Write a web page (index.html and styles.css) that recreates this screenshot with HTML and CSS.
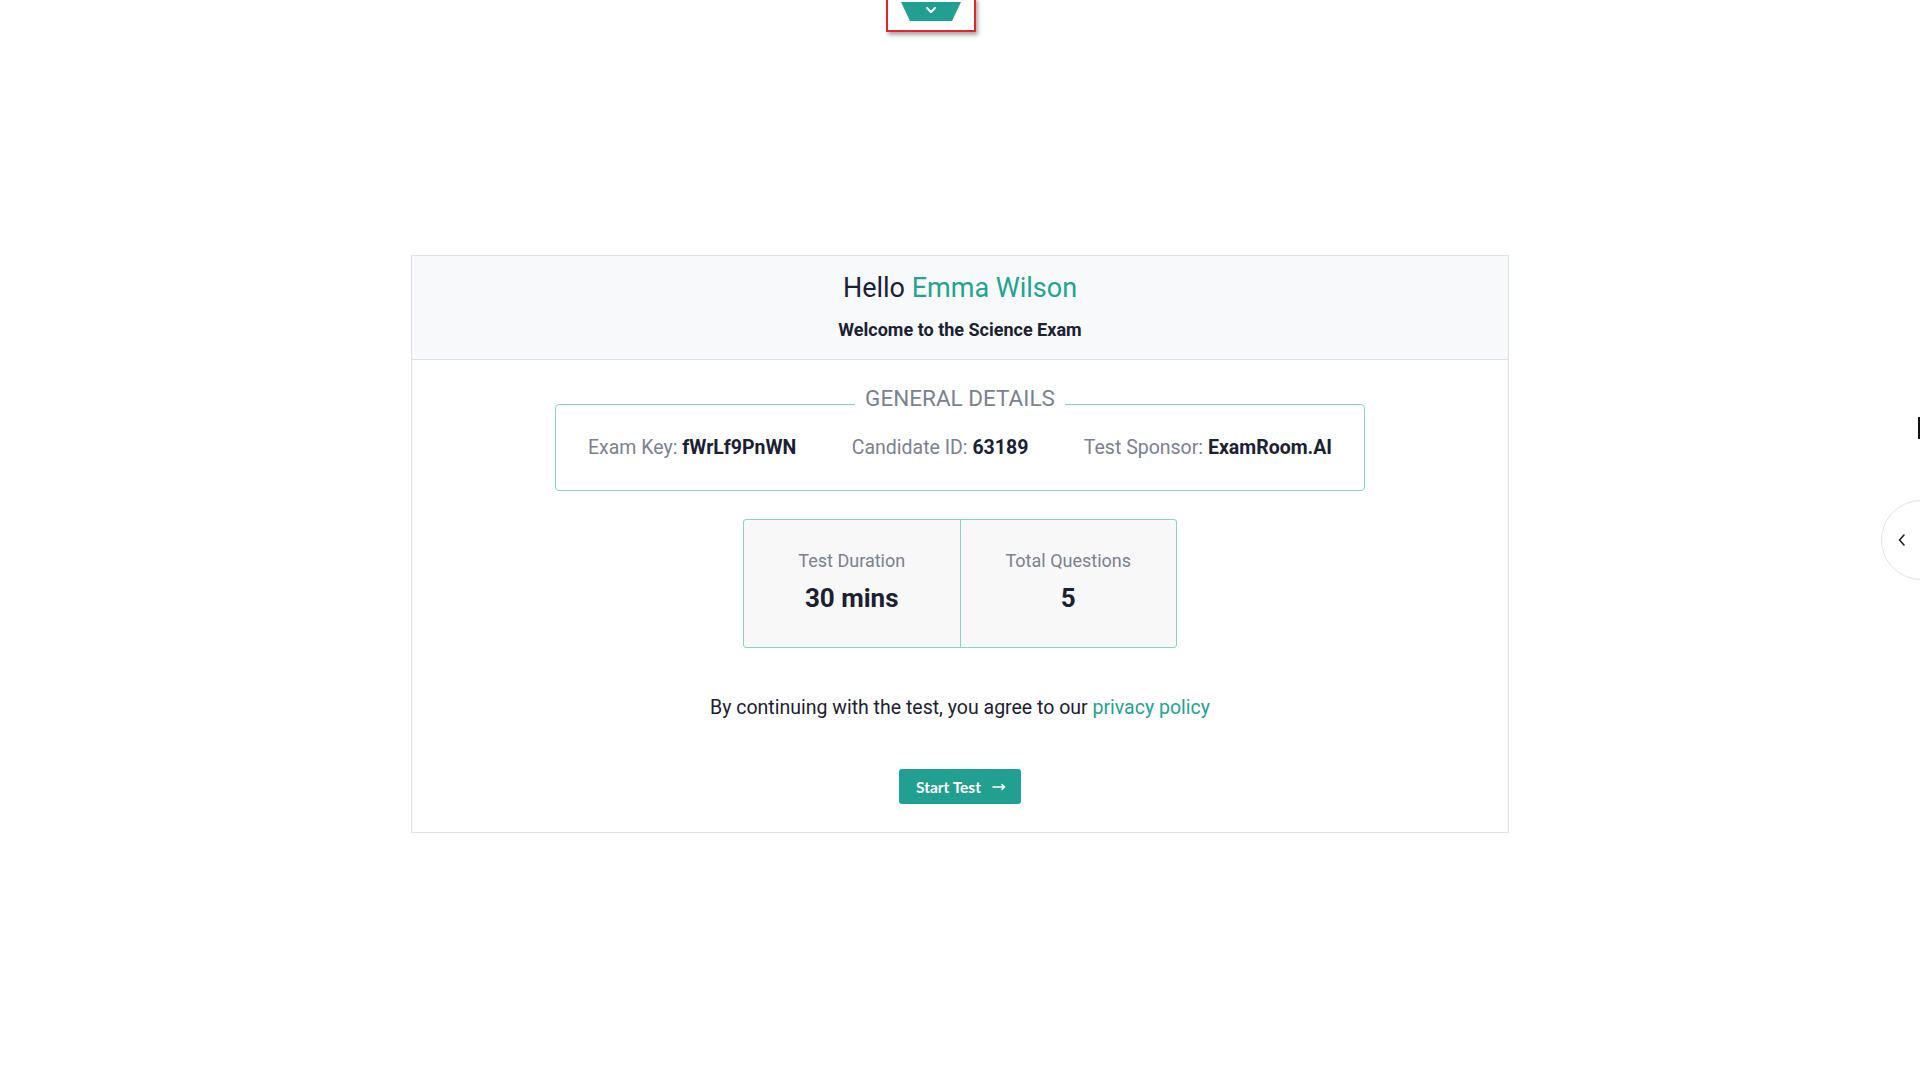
FILE: index.html
```html
<!DOCTYPE html>
<html lang="en">
<head>
<meta charset="utf-8">
<title>Science Exam</title>
<link rel="stylesheet" href="styles.css">
</head>
<body>
<div class="top-tab-frame">
  <div class="top-tab">
    <svg width="12" height="8" viewBox="0 0 12 8"><path d="M2 2 L6 6 L10 2" fill="none" stroke="#fff" stroke-width="2" stroke-linecap="round" stroke-linejoin="round"/></svg>
  </div>
</div>

<div class="side-tab">
  <svg width="10" height="14" viewBox="0 0 10 14"><path d="M7 2 L2.5 7 L7 12" fill="none" stroke="#1c2230" stroke-width="1.6" stroke-linecap="round" stroke-linejoin="round"/></svg>
</div>
<div class="cursor-mark"></div>

<main class="card">
  <header class="card-header">
    <h1 class="hello">Hello <span class="name">Emma Wilson</span></h1>
    <p class="welcome">Welcome to the Science Exam</p>
  </header>
  <section class="card-body">
    <fieldset class="details">
      <legend>GENERAL DETAILS</legend>
      <div class="details-row">
        <span class="item">Exam Key: <b>fWrLf9PnWN</b></span>
        <span class="item">Candidate ID: <b>63189</b></span>
        <span class="item">Test Sponsor: <b>ExamRoom.AI</b></span>
      </div>
    </fieldset>

    <div class="stats">
      <div class="stat">
        <div class="stat-label">Test Duration</div>
        <div class="stat-value">30 mins</div>
      </div>
      <div class="stat">
        <div class="stat-label">Total Questions</div>
        <div class="stat-value">5</div>
      </div>
    </div>

    <p class="agree">By continuing with the test, you agree to our <a href="#">privacy policy</a></p>

    <button class="start">Start Test
      <svg width="14" height="10" viewBox="0 0 14 10"><path d="M1 5 H12.5 M10 2.6 L12.5 5 L10 7.4" fill="none" stroke="#fff" stroke-width="1.6" stroke-linecap="round" stroke-linejoin="round"/></svg>
    </button>
  </section>
</main>
</body>
</html>
```

FILE: styles.css
```css
html, body {
  margin: 0;
  padding: 0;
  background: #ffffff;
}
body {
  font-family: Roboto, "Liberation Sans", Arial, sans-serif;
  color: #1b2132;
  min-height: 1080px;
  position: relative;
  overflow: hidden;
}

.top-tab-frame {
  position: absolute;
  left: 886px;
  top: -3px;
  width: 86px;
  height: 31px;
  border: 2px solid #e3262b;
  box-shadow: 2px 3px 4px rgba(0,0,0,0.35);
  display: flex;
  justify-content: center;
}
.top-tab {
  margin-top: 3px;
  width: 60px;
  height: 19px;
  background: #21a091;
  clip-path: polygon(0 0, 100% 0, 85% 100%, 15% 100%);
  display: flex;
  align-items: flex-start;
  justify-content: center;
  padding-top: 4px;
  box-sizing: border-box;
}

.side-tab {
  position: absolute;
  left: 1881px;
  top: 500px;
  width: 80px;
  height: 80px;
  border-radius: 50%;
  border: 1px solid #dfe3ec;
  background: #fff;
  box-sizing: border-box;
  display: flex;
  align-items: center;
  padding-left: 15px;
}
.cursor-mark {
  position: absolute;
  left: 1918px;
  top: 417px;
  width: 2px;
  height: 22px;
  background: #111;
}

.card {
  width: 1098px;
  margin: 255px auto 0;
  border: 1px solid #dde1ea;
  box-sizing: border-box;
}
.card-header {
  background: #f8f9fb;
  border-bottom: 1px solid #dde1ea;
  height: 104px;
  box-sizing: border-box;
  text-align: center;
  padding-top: 15px;
}
.hello {
  margin: 0;
  font-weight: 400;
  font-size: 27px;
  line-height: 34px;
  color: #1b2132;
}
.name { color: #22a393; }
.welcome {
  margin: 15px 0 0;
  font-size: 18px;
  font-weight: 700;
  line-height: 20px;
  color: #1b2132;
}

.card-body {
  display: flex;
  flex-direction: column;
  align-items: center;
  padding: 25px 0 28px;
}

.details {
  width: 810px;
  box-sizing: border-box;
  margin: 0;
  border: 1px solid #86d3c9;
  border-radius: 4px;
  padding: 0 32px 19px;
}
.details legend {
  margin: 0 auto;
  padding: 0 10px 12px;
  font-size: 22.5px;
  color: #7b818f;
  line-height: 26px;
}
.details-row {
  display: flex;
  justify-content: space-between;
  align-items: center;
  height: 48px;
  font-size: 19.5px;
  color: #7b818f;
}
.details-row b {
  color: #1b2132;
  font-weight: 700;
}

.stats {
  margin-top: 28px;
  display: flex;
  width: 434px;
  height: 129px;
  border: 1px solid #86d3c9;
  border-radius: 3px;
  background: #f8f8f8;
  box-sizing: border-box;
}
.stat {
  flex: 1;
  text-align: center;
  padding-top: 30px;
}
.stat + .stat { border-left: 1px solid #86d3c9; }
.stat-label {
  font-size: 18px;
  color: #7b818f;
  line-height: 22px;
}
.stat-value {
  margin-top: 11px;
  font-size: 26px;
  font-weight: 700;
  line-height: 30px;
  color: #1b2132;
}

.agree {
  margin: 48px 0 0;
  font-size: 19.5px;
  line-height: 24px;
  color: #1b2132;
}
.agree a {
  color: #22a393;
  text-decoration: none;
}

.start {
  margin-top: 49px;
  width: 122px;
  height: 35px;
  border: none;
  border-radius: 3px;
  background: #21a091;
  color: #fff;
  font-family: Lato, "Liberation Sans", sans-serif;
  font-weight: 700;
  font-size: 15.5px;
  display: flex;
  align-items: center;
  justify-content: center;
  gap: 11px;
  padding: 0 0 0 2px;
  cursor: pointer;
}
```
